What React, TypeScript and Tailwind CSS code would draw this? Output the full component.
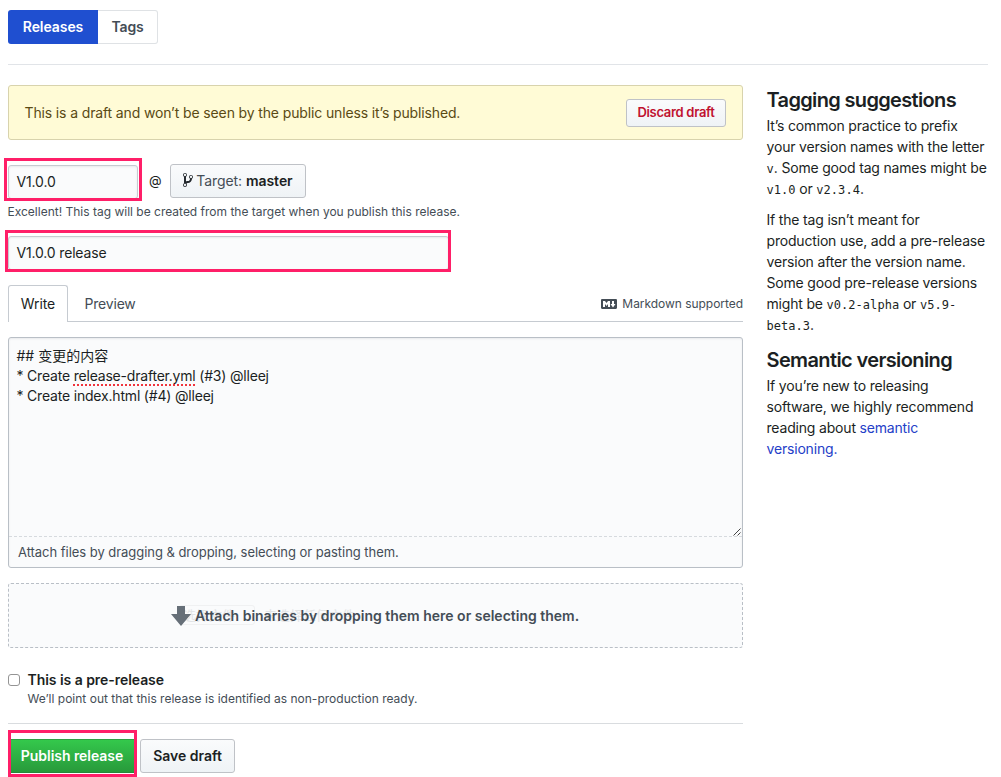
import type { ReactNode } from "react";

const btn =
  "flex items-center justify-center rounded-[3px] border border-[#bfc2c7] bg-linear-to-b from-[#fafbfc] to-[#eff3f6] font-semibold whitespace-nowrap";

function Mark({ className }: { className: string }) {
  return <div className={"pointer-events-none absolute border-[3px] border-[#ff1f68] " + className} />;
}

function Code({ children }: { children: ReactNode }) {
  return <code className="font-['DejaVu_Sans_Mono',monospace] text-[12px] leading-none tracking-[0.03px]">{children}</code>;
}

function BranchIcon() {
  return (
    <svg width="10" height="16" viewBox="0 0 10 16" fill="#24292e" className="-mt-px">
      <path
        fillRule="evenodd"
        d="M10 5c0-1.11-.89-2-2-2a1.993 1.993 0 0 0-1 3.72v.3c-.02.52-.23.98-.63 1.38-.4.4-.86.61-1.38.63-.83.02-1.48.16-2 .45V4.72a1.993 1.993 0 0 0-1-3.72C.88 1 0 1.89 0 3a2 2 0 0 0 1 1.72v6.56c-.59.35-1 .99-1 1.72 0 1.11.89 2 2 2 1.11 0 2-.89 2-2 0-.53-.2-1-.53-1.36.09-.06.48-.41.59-.47.25-.11.56-.17.94-.17 1.05-.05 1.95-.45 2.75-1.25S8.95 7.77 9 6.73h-.02C9.59 6.37 10 5.73 10 5zM2 1.8c.66 0 1.2.55 1.2 1.2 0 .65-.55 1.2-1.2 1.2C1.35 4.2.8 3.65.8 3c0-.65.55-1.2 1.2-1.2zm0 12.41c-.66 0-1.2-.55-1.2-1.2 0-.65.55-1.2 1.2-1.2.65 0 1.2.55 1.2 1.2 0 .65-.55 1.2-1.2 1.2zm6-8c-.66 0-1.2-.55-1.2-1.2 0-.65.55-1.2 1.2-1.2.65 0 1.2.55 1.2 1.2 0 .65-.55 1.2-1.2 1.2z"
      />
    </svg>
  );
}

function MarkdownIcon() {
  return (
    <svg width="16" height="16" viewBox="0 0 16 16" fill="#444d56">
      <path
        fillRule="evenodd"
        d="M14.85 3H1.15C.52 3 0 3.52 0 4.15v7.69C0 12.48.52 13 1.15 13h13.69c.64 0 1.15-.52 1.15-1.15v-7.7C16 3.52 15.48 3 14.85 3zM9 11H7V8L5.5 9.92 4 8v3H2V5h2l1.5 2L7 5h2v6zm2.99.5L9.5 8H11V5h2v3h1.5l-2.51 3.5z"
      />
    </svg>
  );
}

export default function App() {
  return (
    <div className="h-[777px] w-[1001px] overflow-hidden bg-white pt-[10px] pl-2 font-[Inter,'Noto_Sans_CJK_SC',sans-serif] text-[14px] leading-[21px] text-[#1b1f23]">
      <nav className="flex h-[34px] font-semibold">
        <div className="flex w-[90px] items-center justify-center rounded-l-[3px] bg-[#1f4fd0] pb-px text-white">
          <span className="tracking-[-0.07px]">Releases</span>
        </div>
        <div className="flex w-[60px] items-center justify-center rounded-r-[3px] border border-l-0 border-[#dfe2e5] pb-px text-[#444d56]">
          <span className="tracking-[-0.2px]">Tags</span>
        </div>
      </nav>
      <div className="mt-5 h-px w-[980px] bg-[#e1e4e8]" />

      <div className="mt-5 flex">
        <main className="w-[735px] shrink-0">
          <div className="flex h-[55px] items-center justify-between rounded-[3px] border border-[#d8d3ad] bg-[#fffbd6] pr-4 pl-[15.5px] text-[#5a4a14]">
            <span className="tracking-[-0.135px]">This is a draft and won’t be seen by the public unless it’s published.</span>
            <button className={btn + " h-7 w-[100px] text-[13px] text-[#c0122f]"}>
              <span className="tracking-[-0.3px]">Discard draft</span>
            </button>
          </div>

          <div className="mt-6 flex h-[34px] items-center">
            <div className="relative mt-[2px] flex h-[34px] w-[130px] items-center rounded-[3px] border border-[#c6cbd1] bg-[#fafbfc] pb-px pl-[7.5px] shadow-[inset_0_1px_2px_rgba(27,31,35,0.075)]">
              <span className="tracking-[-0.15px]">V1.0.0</span>
              <Mark className="-top-[8px] -left-[5px] h-[43px] w-[138px]" />
            </div>
            <span className="w-8 pb-[2px] pl-[11px] text-[13px]">@</span>
            <button className={btn + " h-[34px] w-[136px] pb-px"}>
              <BranchIcon />
              <span className="ml-[3px] font-normal tracking-[-0.1px] text-[#444d56]">Target:</span>
              <span className="ml-1 tracking-[-0.05px]">master</span>
            </button>
          </div>
          <p className="mt-[5px] -ml-[0.5px] text-[12px] leading-[18px] text-[#444d56]">
            Excellent! This tag will be created from the target when you publish this release.
          </p>

          <div className="relative mt-[15px] flex h-[34px] w-[441px] items-center rounded-[3px] border border-[#c6cbd1] bg-[#fafbfc] pb-px pl-[7.5px] shadow-[inset_0_1px_2px_rgba(27,31,35,0.075)]">
            <span className="tracking-[-0.17px]">V1.0.0 release</span>
            <Mark className="-top-[7px] -left-[4px] h-[42px] w-[446px]" />
          </div>

          <div className="mt-[15px] flex h-[37px] border-b border-[#c6cbd1]">
            <div className="flex h-[37px] w-[60px] items-center justify-center rounded-t-[3px] border border-b-0 border-[#c6cbd1] bg-white pb-px">
              <span className="tracking-[-0.1px]">Write</span>
            </div>
            <div className="flex h-[37px] items-center pl-[16.5px] tracking-[-0.2px] text-[#444d56]">Preview</div>
            <div className="ml-auto flex h-[37px] items-center gap-[5px] text-[12px] text-[#444d56]">
              <MarkdownIcon />
              <span className="tracking-[-0.04px]">Markdown supported</span>
            </div>
          </div>

          <div className="mt-[15px] flex h-[231px] flex-col rounded-[3px] border border-[#b9bfc6] bg-[#fafbfc] shadow-[inset_0_1px_2px_rgba(27,31,35,0.075)]">
            <div className="relative h-[199px] border-b border-dashed border-[#d6dade] pt-[8px] pl-[7.5px] leading-5">
              <div>## 变更的内容</div>
              <div className="tracking-[-0.2px]">
                * Create{" "}
                <span className="underline decoration-[#f0343c] decoration-dotted decoration-2 underline-offset-[3px] [text-decoration-skip-ink:none]">
                  release-drafter.yml
                </span>{" "}
                (#3) @lleej
              </div>
              <div className="tracking-[-0.19px]">* Create index.html (#4) @lleej</div>
              <svg className="absolute right-[1px] bottom-0" width="8" height="8" viewBox="0 0 8 8" stroke="#444" strokeWidth="1">
                <path d="M0.5 7.5L7.5 0.5M4.5 7.5L7.5 4.5" />
              </svg>
            </div>
            <div className="flex flex-1 items-center pt-px pl-[9px] text-[13px] tracking-[-0.04px] text-[#444d56]">
              Attach files by dragging &amp; dropping, selecting or pasting them.
            </div>
          </div>

          <div className="relative mt-[15px] flex h-[65px] items-center rounded-[3px] border border-dashed border-[#b9bfc6] bg-[#fafbfc] pl-[162px]">
            <div className="absolute top-[21px] left-[170px] flex h-5 w-[76px] items-center rounded-[3px] border border-[#f0f1f2] pl-[3px] text-[13px] whitespace-nowrap text-[#e2e4e6]">
              选择文件
              <span className="ml-[29px]">未选择任何文件</span>
            </div>
            <svg className="relative" width="20" height="20" viewBox="0 0 20 20" fill="#666f78">
              <path d="M6 0h8v8h6L10 20 0 8h6z" />
            </svg>
            <span className="relative ml-1 pb-px font-semibold text-[#444d56]">
              Attach binaries by dropping them here or selecting them.
            </span>
          </div>

          <div className="mt-[21px] flex">
            <input type="checkbox" className="mt-[5px] size-3 shrink-0 appearance-none rounded-[3px] border border-[#949494] bg-white" />
            <div className="ml-[7.5px]">
              <div className="font-semibold tracking-[-0.05px]">This is a pre-release</div>
              <p className="text-[12px] leading-[18px] tracking-[0.01px] text-[#444d56]">
                We’ll point out that this release is identified as non-production ready.
              </p>
            </div>
          </div>

          <div className="mt-[15px] h-px bg-[#d9dcdf]" />
          <div className="mt-[15px] flex">
            <div className="relative flex h-[34px] w-[128px] items-center justify-center border-y border-b-[#27873a] border-t-[#2ea043] bg-linear-to-b from-[#34c84c] to-[#289a3b] pb-px font-semibold whitespace-nowrap text-white">
              <span className="tracking-[-0.05px]">Publish release</span>
              <Mark className="-top-[10px] left-0 h-[47px] w-[129px]" />
            </div>
            <button className={btn + " ml-1 h-[34px] w-[95px] pb-px"}>
              <span>Save draft</span>
            </button>
          </div>
        </main>

        <aside className="ml-[23.5px] w-[230px] shrink-0 tracking-[-0.18px] whitespace-nowrap">
          <h2 className="mt-[3px] text-[20px] leading-[25px] font-semibold tracking-[-0.66px]">Tagging suggestions</h2>
          <p className="mt-[2px]">
            It’s common practice to prefix
            <br />
            your version names with the letter
            <br />
            <Code>v</Code>. Some good tag names might be
            <br />
            <Code>v1.0</Code> or <Code>v2.3.4</Code>.
          </p>
          <p className="mt-[10px]">
            If the tag isn’t meant for
            <br />
            production use, add a pre-release
            <br />
            version after the version name.
            <br />
            Some good pre-release versions
            <br />
            might be <Code>v0.2-alpha</Code> or <Code>v5.9-</Code>
            <br />
            <Code>beta.3</Code>.
          </p>
          <h2 className="mt-[13px] text-[20px] leading-[25px] font-semibold tracking-[-0.62px]">Semantic versioning</h2>
          <p className="mt-[2px]">
            If you’re new to releasing
            <br />
            software, we highly recommend
            <br />
            reading about <a className="text-[#2440c8]">semantic</a>
            <br />
            <a className="text-[#2440c8]">versioning.</a>
          </p>
        </aside>
      </div>
    </div>
  );
}
